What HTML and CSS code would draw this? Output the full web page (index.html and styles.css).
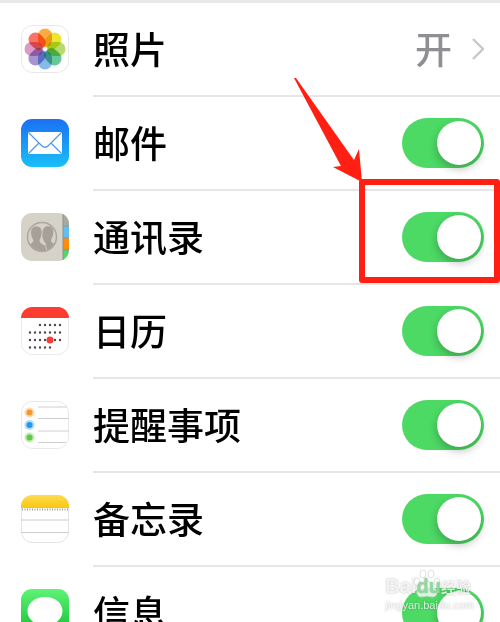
FILE: index.html
```
<!DOCTYPE html>
<html lang="zh-CN">
  <head>
    <meta charset="utf-8" />
    <meta name="viewport" content="width=device-width, initial-scale=1" />
    <title>iCloud</title>
    <link rel="stylesheet" href="styles.css">
  </head>

  <body>
    <main class="screen">
      <ul class="list">
        <li class="row">
          <svg class="icon" viewBox="0 0 48 48" aria-hidden="true">
            <rect x="0.5" y="0.5" width="47" height="47" rx="11" fill="#fff" stroke="#e9e9e9"/>
            <g class="petals">
              <rect x="17" y="3.500" width="14" height="18.500" rx="7" fill="#fdab3e"/>
              <rect x="17" y="3.500" width="14" height="18.500" rx="7" fill="#ebe634" transform="rotate(45 24 24)"/>
              <rect x="17" y="3.500" width="14" height="18.500" rx="7" fill="#b5dc6c" transform="rotate(90 24 24)"/>
              <rect x="17" y="3.500" width="14" height="18.500" rx="7" fill="#66c898" transform="rotate(135 24 24)"/>
              <rect x="17" y="3.500" width="14" height="18.500" rx="7" fill="#85baea" transform="rotate(180 24 24)"/>
              <rect x="17" y="3.500" width="14" height="18.500" rx="7" fill="#a596d2" transform="rotate(225 24 24)"/>
              <rect x="17" y="3.500" width="14" height="18.500" rx="7" fill="#dc9ac4" transform="rotate(270 24 24)"/>
              <rect x="17" y="3.500" width="14" height="18.500" rx="7" fill="#fa7466" transform="rotate(315 24 24)"/>
            </g>
            <circle cx="24" cy="24" r="1.500" fill="#fff"/>
          </svg>
          <a class="cell" href="#photos">
            <span class="label">照片</span>
            <span class="value">开</span>
            <svg class="chevron" viewBox="0 0 12 22" aria-hidden="true">
              <path d="M1 1l10 10L1 21" fill="none" stroke="#c7c7cc" stroke-width="2.4"/>
            </svg>
          </a>
        </li>

        <li class="row">
          <svg class="icon" viewBox="0 0 48 48" aria-hidden="true">
            <defs>
              <linearGradient id="mailBg" x1="0" y1="0" x2="0" y2="1">
                <stop offset="0" stop-color="#1d70f2"/>
                <stop offset="1" stop-color="#19bff8"/>
              </linearGradient>
            </defs>
            <rect width="48" height="48" rx="11" fill="url(#mailBg)"/>
            <rect x="7" y="13" width="34" height="22" rx="2" fill="#fff"/>
            <path d="M8 14l12.500 12.500q3.500 3.500 7 0L40 14M8 34l10-10M40 34L30 24" fill="none" stroke="#4b97ee" stroke-width="1.200"/>
          </svg>
          <div class="cell">
            <label class="label" for="mail">邮件</label>
            <input class="switch" type="checkbox" id="mail" checked>
          </div>
        </li>

        <li class="row">
          <svg class="icon" viewBox="0 0 48 48" aria-hidden="true">
            <defs>
              <clipPath id="contactsShape"><rect width="48" height="48" rx="11"/></clipPath>
              <clipPath id="contactsCircle"><circle cx="21" cy="24" r="14"/></clipPath>
            </defs>
            <g clip-path="url(#contactsShape)">
              <rect width="48" height="48" fill="#d5d3c7"/>
              <rect x="42" width="6" height="13" fill="#aaa99f"/>
              <rect x="42" y="13" width="6" height="12" fill="#62bdf4"/>
              <rect x="42" y="25" width="6" height="12" fill="#fb8c0c"/>
              <rect x="42" y="37" width="6" height="11" fill="#4fd868"/>
              <path d="M42 0v48M42 13h6M42 25h6M42 37h6" stroke="#918f86" stroke-width="1"/>
            </g>
            <g clip-path="url(#contactsCircle)" fill="#a7a099">
              <path d="M27 13c5 0 6 5 5 9-1 3-2 4-2 6 1 3 6 3 7 5v6H21c1-4 4-6 4-8-3-3-5-9-3-14 1-3 3-4 5-4z"/>
              <path d="M15.500 13c4 0 6 3 5.500 8-.3 3-2 5-2 7 0 3 5 3 6 6l1 5H5v-6c2-2 6-2 7-5 0-2-2-4-2.300-7-.5-5 2-8 5.800-8z" stroke="#d5d3c7" stroke-width=".8"/>
            </g>
            <circle cx="21" cy="24" r="14.500" fill="none" stroke="#aca69e" stroke-width="1.500"/>
          </svg>
          <div class="cell">
            <label class="label" for="contacts">通讯录</label>
            <input class="switch" type="checkbox" id="contacts" checked>
          </div>
          <div class="highlight">
            <svg class="arrow" viewBox="0 0 70 106" aria-hidden="true">
              <path d="M0 0L2 0L60 82L65 71L68 104L39 89L47 88z" fill="#ff2013"/>
            </svg>
          </div>
        </li>

        <li class="row">
          <svg class="icon" viewBox="0 0 48 48" aria-hidden="true">
            <rect x="0.5" y="0.5" width="47" height="47" rx="11" fill="#fff" stroke="#e9e9e9"/>
            <path d="M0 11C0 5 5 0 11 0h26c6 0 11 5 11 11z" fill="#fd3c31"/>
            <g fill="none" stroke="#4b4b4b" stroke-width="2.400" stroke-linecap="round">
              <path d="M19 18h21" stroke-dasharray="0 5"/>
              <path d="M9 25.500h31M9 33h31" stroke-dasharray="0 5"/>
              <path d="M9 40.500h21" stroke-dasharray="0 5"/>
            </g>
            <circle cx="29" cy="33" r="3.500" fill="#fd3c31"/>
          </svg>
          <div class="cell">
            <label class="label" for="calendar">日历</label>
            <input class="switch" type="checkbox" id="calendar" checked>
          </div>
        </li>

        <li class="row">
          <svg class="icon" viewBox="0 0 48 48" aria-hidden="true">
            <rect x="0.5" y="0.5" width="47" height="47" rx="11" fill="#fff" stroke="#e9e9e9"/>
            <path d="M17 6h29M17 17.500h31M17 30h31M17 41.500h28" stroke="#cfcfcf" stroke-width="1"/>
            <g fill-opacity=".4">
              <circle cx="8.500" cy="11.500" r="5" fill="#f9a23a"/>
              <circle cx="8.500" cy="24" r="5" fill="#37a9f0"/>
              <circle cx="8.500" cy="36.500" r="5" fill="#67d24c"/>
            </g>
            <circle cx="8.500" cy="11.500" r="3" fill="#f4982c"/>
            <circle cx="8.500" cy="24" r="3" fill="#259be8"/>
            <circle cx="8.500" cy="36.500" r="3" fill="#5fcb45"/>
          </svg>
          <div class="cell">
            <label class="label" for="reminders">提醒事项</label>
            <input class="switch" type="checkbox" id="reminders" checked>
          </div>
        </li>

        <li class="row">
          <svg class="icon" viewBox="0 0 48 48" aria-hidden="true">
            <defs>
              <linearGradient id="notesBg" x1="0" y1="0" x2="0" y2="1">
                <stop offset="0" stop-color="#fddb53"/>
                <stop offset="1" stop-color="#f9c70d"/>
              </linearGradient>
            </defs>
            <rect x="0.5" y="0.5" width="47" height="47" rx="11" fill="#fff" stroke="#e4e4e4"/>
            <path d="M0 13v-2C0 5 5 0 11 0h26c6 0 11 5 11 11v2z" fill="url(#notesBg)"/>
            <path d="M1 14.500h46" stroke="#a9a08a" stroke-width="2" stroke-dasharray="1 1.500"/>
            <path d="M0 25h48M0 37.500h48" stroke="#cccccc" stroke-width="1"/>
          </svg>
          <div class="cell">
            <label class="label" for="notes">备忘录</label>
            <input class="switch" type="checkbox" id="notes" checked>
          </div>
        </li>

        <li class="row">
          <svg class="icon" viewBox="0 0 48 48" aria-hidden="true">
            <defs>
              <linearGradient id="messagesBg" x1="0" y1="0" x2="0" y2="1">
                <stop offset="0" stop-color="#5ff377"/>
                <stop offset="1" stop-color="#0dbd2a"/>
              </linearGradient>
            </defs>
            <rect width="48" height="48" rx="11" fill="url(#messagesBg)"/>
            <path d="M24 8c10 0 17.500 6 17.500 14S34 36.500 24 36.500c-2 0-3.500-.2-5-.6-2 2-4.500 3.100-8 3.600 2-1.500 3-3.500 3-5.500-4.500-2.500-7.500-7-7.500-12C6.500 14 14 8 24 8z" fill="#fff"/>
          </svg>
          <div class="cell">
            <label class="label" for="messages">信息</label>
            <input class="switch" type="checkbox" id="messages" checked>
          </div>
        </li>
      </ul>

      <div class="watermark">
        <svg class="paw" viewBox="0 0 28 30" aria-hidden="true">
          <g fill="#fff" stroke="#d8d8d8" stroke-width="1">
            <ellipse cx="4" cy="13" rx="3" ry="4"/>
            <ellipse cx="10" cy="5" rx="3" ry="4"/>
            <ellipse cx="18" cy="5" rx="3" ry="4"/>
            <ellipse cx="24" cy="13" rx="3" ry="4"/>
            <path d="M14 12c4 0 5 5 8 7 4 4 2 9-3 9-2 0-3-1-5-1s-3 1-5 1c-5 0-7-5-3-9 3-2 4-7 8-7z"/>
          </g>
        </svg>
        <span class="brand">Bai<span class="du">du</span><span class="brand-cn">经验</span></span>
        <span class="site">jingyan.baidu.com</span>
      </div>
    </main>
  </body>
</html>
```
FILE: styles.css
```
* {
  box-sizing: border-box;
}
body {
  margin: 0;
  background: #fff;
  color: #000;
  font-family: "Liberation Sans", "Noto Sans CJK SC", sans-serif;
}
.screen {
  position: relative;
  height: 100vh;
  overflow: hidden;
}
.list {
  list-style: none;
  margin: 0;
  padding: 0;
  border-top: 3px solid #e9e9eb;
}
.row {
  position: relative;
  display: flex;
  height: 94px;
  padding-left: 21px;
  gap: 24px;
}
.icon {
  flex: none;
  width: 48px;
  height: 48px;
  margin-top: 22px;
}
.petals {
  isolation: isolate;
}
.petals rect {
  mix-blend-mode: multiply;
}
.cell {
  flex: 1;
  display: flex;
  align-items: center;
  padding-right: 16px;
  border-bottom: 2px solid #e6e6e8;
  color: inherit;
  text-decoration: none;
}
.label,
.value {
  padding-top: 5px;
  font-size: 37px;
  font-weight: 500;
  line-height: 48px;
}
.label {
  flex: 1;
}
.value {
  color: #8e8e93;
}
.chevron {
  width: 12px;
  height: 22px;
  margin-left: 20px;
}

/* switches */
.switch {
  appearance: none;
  flex: none;
  width: 82px;
  height: 50px;
  margin: 0;
  padding: 3px;
  border-radius: 25px;
  background: #e5e5ea;
}
.switch::before {
  content: "";
  display: block;
  width: 44px;
  height: 44px;
  border-radius: 50%;
  background: #fff;
  box-shadow: 0 4px 8px rgba(0, 0, 0, 0.25);
}
.switch:checked {
  background: #4cd964;
}
.switch:checked::before {
  margin-left: auto;
}

/* red box and arrow over the contacts switch */
.highlight {
  position: absolute;
  top: -12px;
  right: 0;
  width: 141px;
  height: 104px;
  border: 6px solid #ff2013;
  border-radius: 3px;
  pointer-events: none;
}
.arrow {
  position: absolute;
  top: -107px;
  left: -71px;
  width: 70px;
  height: 106px;
}

.watermark {
  position: absolute;
  right: 26px;
  bottom: 10px;
  display: flex;
  flex-direction: column;
  color: rgba(255, 255, 255, 0.8);
  text-shadow: 0 0 2px rgba(0, 0, 0, 0.3);
  white-space: nowrap;
  pointer-events: none;
}
.brand {
  font-size: 20px;
  font-weight: bold;
  line-height: 20px;
}
.du {
  position: relative;
  z-index: 1;
  color: #8fd9a0;
}
.brand-cn {
  font-size: 15px;
}
.site {
  font-size: 11px;
  line-height: 14px;
}
.paw {
  position: absolute;
  left: 28px;
  bottom: 13px;
  width: 28px;
  height: 30px;
  opacity: 0.8;
}
```
